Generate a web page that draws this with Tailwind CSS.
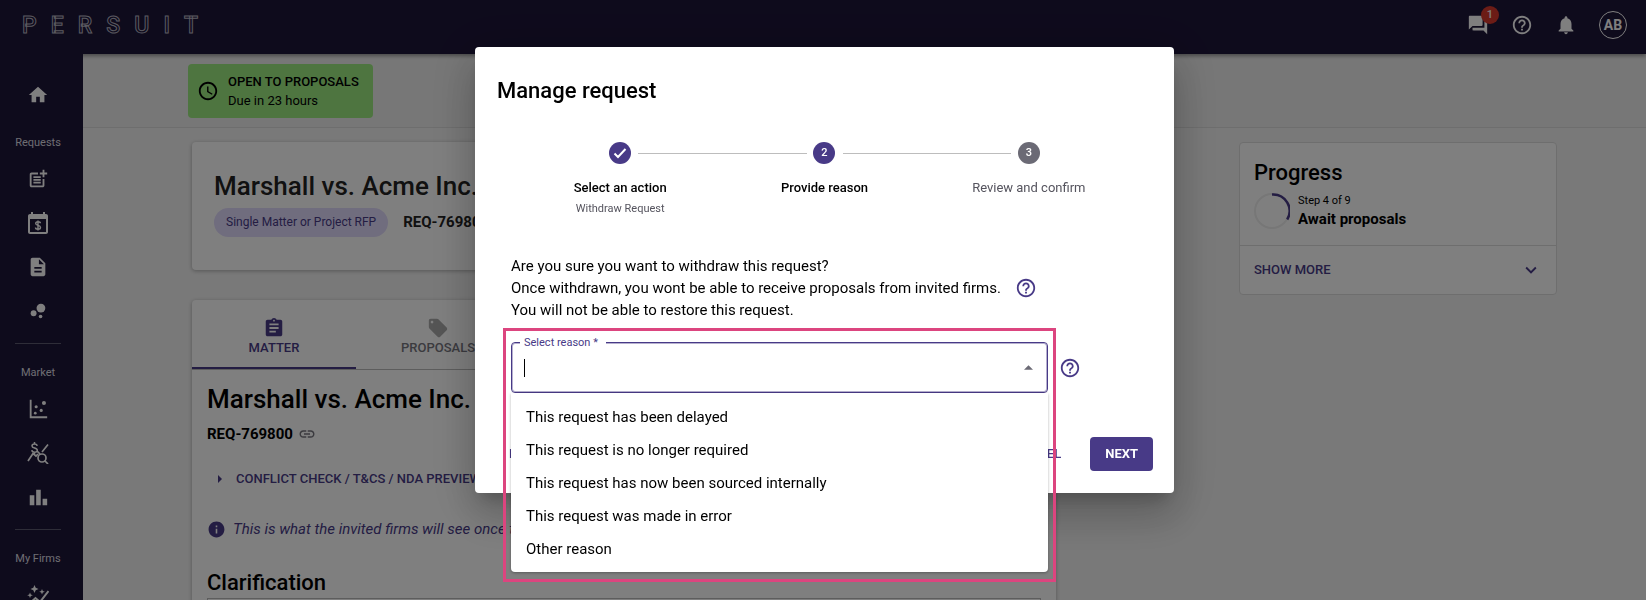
<!DOCTYPE html>
<html lang="en">
<head>
    <meta charset="UTF-8">
    <meta name="viewport" content="width=device-width, initial-scale=1.0">
    <title>Manage request</title>
    <script src="https://cdn.jsdelivr.net/npm/@tailwindcss/browser@4"></script>
</head>
<body class="h-screen overflow-hidden bg-[#f3f3f3] font-['Roboto',sans-serif] text-black">

    <!-- Shared icons -->
    <svg class="hidden">
        <symbol id="help" viewBox="0 0 24 24"><path d="M11 18h2v-2h-2v2zm1-16C6.48 2 2 6.48 2 12s4.48 10 10 10 10-4.48 10-10S17.52 2 12 2zm0 18c-4.41 0-8-3.59-8-8s3.59-8 8-8 8 3.59 8 8-3.59 8-8 8zm0-14c-2.21 0-4 1.79-4 4h2c0-1.1.9-2 2-2s2 .9 2 2c0 2-3 1.75-3 5h2c0-2.25 3-2.5 3-5 0-2.21-1.79-4-4-4z"/></symbol>
    </svg>

    <div class="flex h-full flex-col overflow-hidden">
        <!-- Top bar -->
        <header class="relative z-10 flex h-[54px] shrink-0 items-center justify-between bg-[#1d1639] pr-[19px] pb-1 pl-[22px] text-white shadow-[0_2px_4px_rgba(0,0,0,0.4)]">
            <a href="#" aria-label="PERSUIT" class="flex w-[176px] justify-between text-[23px] leading-none font-medium text-[#1d1639] [-webkit-text-stroke:1px_#b5b3c0]">
                <span>P</span><span>E</span><span>R</span><span>S</span><span>U</span><span>I</span><span>T</span>
            </a>
            <div class="flex items-center gap-[22px]">
                <button class="relative" aria-label="Messages">
                    <svg class="size-[22px] fill-current" viewBox="0 0 24 24"><path d="M21 6h-2v9H6v2c0 .55.45 1 1 1h11l4 4V7c0-.55-.45-1-1-1zm-4 6V3c0-.55-.45-1-1-1H3c-.55 0-1 .45-1 1v14l4-4h10c.55 0 1-.45 1-1z"/></svg>
                    <span class="absolute -top-2 left-[14px] flex size-[18px] items-center justify-center rounded-full bg-[#d8382c] text-[11px] font-medium">1</span>
                </button>
                <button aria-label="Help"><svg class="size-[22px] fill-current"><use href="#help"/></svg></button>
                <button aria-label="Notifications"><svg class="size-[22px] fill-current" viewBox="0 0 24 24"><path d="M12 22c1.1 0 2-.9 2-2h-4c0 1.1.89 2 2 2zm6-6v-5c0-3.07-1.64-5.64-4.5-6.32V4c0-.83-.67-1.5-1.5-1.5s-1.5.67-1.5 1.5v.68C7.63 5.36 6 7.92 6 11v5l-2 2v1h16v-1l-2-2z"/></svg></button>
                <button class="flex size-7 items-center justify-center rounded-full border border-white text-[14px] font-bold">AB</button>
            </div>
        </header>

        <div class="flex min-h-0 flex-1">
            <!-- Sidebar -->
            <nav class="relative z-20 flex w-[83px] shrink-0 flex-col items-center overflow-hidden bg-[#1d1639] pt-[19px] pr-[7px] text-[11px] text-[#dddce3]">
                <a href="#" aria-label="Home" class="flex h-11 shrink-0 items-center text-white"><svg class="size-[22px] fill-current" viewBox="0 0 24 24"><path d="M10 20v-6h4v6h5v-8h3L12 3 2 12h3v8z"/></svg></a>
                <p class="flex h-10 shrink-0 items-center pt-3">Requests</p>
                <a href="#" aria-label="New request" class="flex h-11 shrink-0 items-center text-white"><svg class="size-[22px] fill-current" viewBox="0 0 24 24"><path d="M17 19.22H5V7h7V5H5c-1.1 0-2 .9-2 2v12c0 1.1.9 2 2 2h12c1.1 0 2-.9 2-2v-7h-2v7.22zM19 2h-2v3h-3v2h3v3h2V7h3V5h-3V2zM7 9h8v2H7zM7 12h8v2H7zM7 15h8v2H7z"/></svg></a>
                <a href="#" aria-label="Billing" class="flex h-11 shrink-0 items-center text-white"><svg class="size-[22px] fill-current" viewBox="0 0 22 22"><path fill-rule="evenodd" d="M4 0h2v2h10V0h2v2h1c1.1 0 2 .9 2 2v16c0 1.1-.9 2-2 2H3c-1.1 0-2-.9-2-2V4c0-1.1.9-2 2-2h1zM3 7v13h16V7z"/><path d="M11 8.5v10M13.4 11.3c0-1-1-1.6-2.4-1.6s-2.3.7-2.3 1.8c0 2.5 4.8 1.3 4.8 3.9 0 1.1-1 1.8-2.5 1.8s-2.5-.7-2.5-1.8" fill="none" stroke="currentColor" stroke-width="1.4"/></svg></a>
                <a href="#" aria-label="Documents" class="flex h-11 shrink-0 items-center text-white"><svg class="size-[22px] fill-current" viewBox="0 0 24 24"><path d="M14 2H6c-1.1 0-1.99.9-1.99 2L4 20c0 1.1.89 2 1.99 2H18c1.1 0 2-.9 2-2V8l-6-6zm2 16H8v-2h8v2zm0-4H8v-2h8v2zm-3-5V3.5L18.5 9H13z"/></svg></a>
                <a href="#" aria-label="Groups" class="flex h-11 shrink-0 items-center text-white"><svg class="size-[22px] fill-current" viewBox="0 0 24 24"><circle cx="7.2" cy="14.4" r="3.2"/><circle cx="14.8" cy="18" r="2"/><circle cx="15.2" cy="8.8" r="4.8"/></svg></a>
                <hr class="mt-[10px] mb-[3px] w-[46px] shrink-0 border-[#5d5a70]">
                <p class="flex h-10 shrink-0 items-center pt-3">Market</p>
                <a href="#" aria-label="Scatter" class="flex h-11 shrink-0 items-center text-white"><svg class="size-[22px] fill-current" viewBox="0 0 24 24"><path d="M3 2h2v18h17v2H3z"/><circle cx="9" cy="16.5" r="1.5"/><circle cx="10" cy="9.5" r="1.7"/><circle cx="15.5" cy="13.5" r="1.7"/><circle cx="18.5" cy="5.5" r="2.2"/></svg></a>
                <a href="#" aria-label="Price research" class="flex h-11 shrink-0 items-center text-white"><svg class="size-[22px]" viewBox="0 0 22 22" fill="none" stroke="currentColor" stroke-width="1.7"><path d="M1 19l5-7.500 3 2.500 2-2M15 10l6-7.500"/><circle cx="15" cy="16" r="4"/><path d="M18 19l3 3"/><path d="M7.500 0v2M7.500 10v2M10.200 3.800C10 2.500 9 1.900 7.500 1.900S5 2.600 5 4c0 2.700 5.300 1.400 5.300 4.200 0 1.300-1.200 2-2.700 2S5 9.500 4.800 8.200" stroke-width="1.500"/><path d="M10 9l3 3"/></svg></a>
                <a href="#" aria-label="Reports" class="flex h-11 shrink-0 items-center text-white"><svg class="size-[22px] fill-current" viewBox="0 0 24 24"><path d="M3 10h5v11H3zM10 4h5v17h-5zM17 14h5v7h-5z"/></svg></a>
                <hr class="mt-[10px] mb-[3px] w-[46px] shrink-0 border-[#5d5a70]">
                <p class="flex h-10 shrink-0 items-center pt-3">My Firms</p>
                <a href="#" aria-label="Insights" class="flex h-11 shrink-0 items-center text-white"><svg class="size-[22px]" viewBox="0 0 22 22"><path fill="currentColor" d="M7.5 1l1.2 2.8 2.8 1.2-2.8 1.2L7.5 9 6.3 6.2 3.5 5l2.8-1.2zM15 5l.8 2 2 .8-2 .8-.8 2-.8-2-2-.8 2-.8zM3 8.5l.8 2 2 .8-2 .8-.8 2-.8-2-2-.8 2-.8z"/><path fill="none" stroke="currentColor" stroke-width="2" d="M2 20l6.5-6 4.5 4L21.500 7"/></svg></a>
            </nav>

            <!-- Page content -->
            <main class="flex min-w-0 flex-1 flex-col overflow-hidden">
                <div class="flex h-[74px] shrink-0 items-center border-b border-[#dddddd] bg-[#efefef] pl-[105px]">
                    <div class="flex h-[54px] items-center gap-[9px] rounded-sm bg-[#9cea80] pr-[14px] pl-[9px]">
                        <svg class="size-[22px]" viewBox="0 0 24 24"><path d="M11.99 2C6.47 2 2 6.48 2 12s4.47 10 9.99 10C17.52 22 22 17.52 22 12S17.52 2 11.99 2zM12 20c-4.42 0-8-3.58-8-8s3.58-8 8-8 8 3.58 8 8-3.58 8-8 8zm.5-13H11v6l5.25 3.15.75-1.23-4.5-2.67z"/></svg>
                        <div class="text-[13px] leading-[19px]">
                            <p class="font-medium">OPEN TO PROPOSALS</p>
                            <p>Due in 23 hours</p>
                        </div>
                    </div>
                </div>

                <div class="flex min-h-0 flex-1 items-start gap-[183px] pt-[14px] pr-[89px] pl-[109px]">
                    <div class="flex min-w-0 flex-1 flex-col gap-[30px]">
                        <!-- Request summary -->
                        <section class="h-32 rounded-sm bg-white pt-[28px] pl-[22px] text-[#222222] shadow-[0_1px_4px_rgba(0,0,0,0.3)]">
                            <h1 class="text-[26px] leading-8 font-medium">Marshall vs. Acme Inc.</h1>
                            <div class="mt-[6px] flex items-center gap-[15px]">
                                <span class="rounded-full bg-[#e1dafd] px-3 text-[12px] leading-[29px] text-[#483a87]">Single Matter or Project RFP</span>
                                <span class="text-[15px] font-bold">REQ-769800</span>
                            </div>
                        </section>

                        <!-- Request detail -->
                        <section class="rounded-sm bg-white shadow-[0_1px_4px_rgba(0,0,0,0.3)]">
                            <div class="flex border-b border-[#bbbbbb] text-[13px] leading-[18px] font-medium">
                                <button class="flex h-[69px] w-[164px] flex-col items-center border-b-2 border-[#483a87] pt-[17px] text-[#483a87]">
                                    <svg class="size-[22px] fill-current" viewBox="0 0 24 24"><path d="M19 3h-4.18C14.4 1.84 13.3 1 12 1c-1.3 0-2.4.84-2.82 2H5c-1.1 0-2 .9-2 2v14c0 1.1.9 2 2 2h14c1.1 0 2-.9 2-2V5c0-1.1-.9-2-2-2zm-7 0c.55 0 1 .45 1 1s-.45 1-1 1-1-.45-1-1 .45-1 1-1zm2 14H7v-2h7v2zm3-4H7v-2h10v2zm0-4H7V7h10v2z"/></svg>
                                    MATTER
                                </button>
                                <button class="flex h-[69px] w-[164px] flex-col items-center pt-[17px] text-[#77767f]">
                                    <svg class="size-[22px] fill-[#aaaaaa]" viewBox="0 0 24 24"><path d="M21.41 11.58l-9-9C12.05 2.22 11.55 2 11 2H4c-1.1 0-2 .9-2 2v7c0 .55.22 1.05.59 1.42l9 9c.36.36.86.58 1.41.58.55 0 1.05-.22 1.41-.59l7-7c.37-.36.59-.86.59-1.41 0-.55-.23-1.06-.59-1.42zM5.5 7C4.67 7 4 6.33 4 5.5S4.67 4 5.5 4 7 4.67 7 5.5 6.33 7 5.5 7z"/></svg>
                                    PROPOSALS
                                </button>
                            </div>
                            <div class="px-[15px] pt-[13px]">
                                <h2 class="text-[26px] leading-8 font-medium">Marshall vs. Acme Inc.</h2>
                                <p class="mt-2 flex items-center gap-[5px] text-[15px] leading-[22px] font-bold">REQ-769800
                                    <svg class="size-[18px] fill-[#77767f]" viewBox="0 0 24 24"><path d="M3.900 12c0-1.710 1.390-3.100 3.100-3.100h4V7H7c-2.760 0-5 2.240-5 5s2.240 5 5 5h4v-1.900H7c-1.710 0-3.100-1.390-3.100-3.100zM8 13h8v-2H8v2zm9-6h-4v1.900h4c1.710 0 3.100 1.390 3.100 3.100s-1.390 3.100-3.100 3.100h-4V17h4c2.760 0 5-2.240 5-5s-2.240-5-5-5z"/></svg>
                                </p>
                                <button class="mt-[23px] flex items-center gap-[14px] pl-[11px] text-[13px] leading-[22px] font-medium text-[#483a87]">
                                    <svg class="h-2 w-1 fill-current" viewBox="0 0 4 8"><path d="M0 0l4 4-4 4z"/></svg>
                                    CONFLICT CHECK / T&amp;CS / NDA PREVIEW
                                </button>
                                <p class="mt-[28px] flex items-center gap-[7px] text-[15px] leading-[22px] text-[#483a87] italic">
                                    <svg class="size-[19px] fill-current" viewBox="0 0 24 24"><path d="M12 2C6.48 2 2 6.48 2 12s4.48 10 10 10 10-4.48 10-10S17.52 2 12 2zm1 15h-2v-6h2v6zm0-8h-2V7h2v2z"/></svg>
                                    This is what the invited firms will see once the request is open.
                                </p>
                                <h3 class="mt-[28px] text-[22px] leading-[30px] font-medium">Clarification</h3>
                                <div class="h-10 border border-[#bbbbbb]"></div>
                            </div>
                        </section>
                    </div>

                    <!-- Progress -->
                    <aside class="w-[318px] shrink-0 rounded-sm border border-[#dddddd] bg-white">
                        <div class="h-[102px] px-[14px] pt-[14px]">
                            <h2 class="text-[22px] leading-8 font-medium">Progress</h2>
                            <div class="mt-1 flex items-center gap-2">
                                <svg class="size-9" viewBox="0 0 36 36" fill="none" stroke-width="2"><circle cx="18" cy="18" r="17" stroke="#eeeeee"/><path d="M18 1.5a16.5 16.5 0 0 1 15.2 25" stroke="#483a87" stroke-width="2.500"/></svg>
                                <div>
                                    <p class="text-[11px] leading-4">Step 4 of 9</p>
                                    <p class="text-[15px] leading-5 font-bold">Await proposals</p>
                                </div>
                            </div>
                        </div>
                        <button class="flex h-[49px] w-full items-center justify-between border-t border-[#dddddd] px-[14px] text-[13px] font-medium text-[#483a87]">SHOW MORE
                            <svg class="size-[22px] fill-current" viewBox="0 0 24 24"><path d="M7.41 8.59L12 13.17l4.59-4.58L18 10l-6 6-6-6z"/></svg>
                        </button>
                    </aside>
                </div>
            </main>
        </div>
    </div>

    <!-- Manage request dialog -->
    <div class="fixed inset-0 z-30 flex items-start justify-center bg-black/50 pt-[47px] pl-[3px]">
        <div role="dialog" aria-labelledby="dialog-title" class="w-[699px] rounded-sm bg-white pb-[22px] shadow-[0_11px_15px_-7px_rgba(0,0,0,0.2),0_24px_38px_3px_rgba(0,0,0,0.14),0_9px_46px_8px_rgba(0,0,0,0.12)]">
            <h2 id="dialog-title" class="px-[22px] pt-[29px] text-[22px] leading-[30px] font-medium">Manage request</h2>

            <ol class="mx-[43px] mt-[36px] flex h-[102px] text-center text-[13px] leading-[18px]">
                <li class="relative flex flex-1 flex-col items-center">
                    <svg class="size-[22px]" viewBox="0 0 22 22"><circle cx="11" cy="11" r="11" fill="#483a87"/><path d="M5.5 11.500l3.500 3.500 7.500-8" fill="none" stroke="#fff" stroke-width="2"/></svg>
                    <p class="mt-[15px] font-medium">Select an action</p>
                    <p class="mt-1 text-[11px] leading-[16px] text-[#55545e]">Withdraw Request</p>
                </li>
                <li class="relative flex flex-1 flex-col items-center">
                    <span class="absolute top-[11px] right-1/2 left-[-50%] mx-[18px] h-px bg-[#bdbdbd]"></span>
                    <span class="flex size-[22px] items-center justify-center rounded-full bg-[#483a87] text-[11px] font-medium text-white">2</span>
                    <p class="mt-[15px] font-medium">Provide reason</p>
                </li>
                <li class="relative flex flex-1 flex-col items-center">
                    <span class="absolute top-[11px] right-1/2 left-[-50%] mx-[18px] h-px bg-[#bdbdbd]"></span>
                    <span class="flex size-[22px] items-center justify-center rounded-full bg-[#6b6a75] text-[11px] font-medium text-white">3</span>
                    <p class="mt-[15px] text-[#55545e]">Review and confirm</p>
                </li>
            </ol>

            <div class="px-[36px] pt-[11px]">
                <div class="flex items-center gap-[14px]">
                    <p class="text-[15px] leading-[22px]">Are you sure you want to withdraw this request?<br>Once withdrawn, you wont be able to receive proposals from invited firms.<br>You will not be able to restore this request.</p>
                    <button aria-label="About withdrawing" class="text-[#483a87]"><svg class="size-[22px] fill-current"><use href="#help"/></svg></button>
                </div>

                <div class="mt-[21px] flex items-center gap-[11px]">
                    <div class="relative w-[537px]">
                        <label for="reason" class="absolute -top-[7px] left-[9px] bg-white pr-2 pl-1 text-[11px] leading-4 text-[#483a87]">Select reason *</label>
                        <input id="reason" type="text" role="combobox" aria-expanded="true" class="block h-[51px] w-full rounded-sm border border-[#483a87] px-3 text-[15px] outline-1 -outline-offset-2 outline-[#483a87]/40">
                        <span class="absolute top-[17px] left-[13px] h-[18px] w-px bg-black"></span>
                        <svg class="absolute top-[23px] right-[15px] h-[5px] w-[9px] fill-[#6b6a75]" viewBox="0 0 10 5"><path d="M0 5l5-5 5 5z"/></svg>

                        <!-- Options -->
                        <ul role="listbox" class="absolute top-full right-0 left-0 z-10 rounded-b-sm bg-white pt-2 pb-[6px] text-[15px] leading-[33px] shadow-[0_1px_3px_rgba(0,0,0,0.3)]">
                            <li role="option" class="px-[15px]">This request has been delayed</li>
                            <li role="option" class="px-[15px]">This request is no longer required</li>
                            <li role="option" class="px-[15px]">This request has now been sourced internally</li>
                            <li role="option" class="px-[15px]">This request was made in error</li>
                            <li role="option" class="px-[15px]">Other reason</li>
                        </ul>
                        <div class="pointer-events-none absolute -top-[14px] -right-2 -left-2 z-20 h-[254px] border-3 border-[#dc457f]"></div>
                    </div>
                    <button aria-label="About reasons" class="text-[#483a87]"><svg class="size-[22px] fill-current"><use href="#help"/></svg></button>
                </div>
            </div>

            <div class="mt-[44px] flex items-center pr-[21px] pl-[34px] text-[13px] font-medium text-[#483a87]">
                <button class="mr-auto">BACK</button>
                <button class="mr-[29px]">CANCEL</button>
                <button class="h-[34px] rounded-sm bg-[#483a87] px-[15px] font-bold text-white">NEXT</button>
            </div>
        </div>
    </div>

</body>
</html>
